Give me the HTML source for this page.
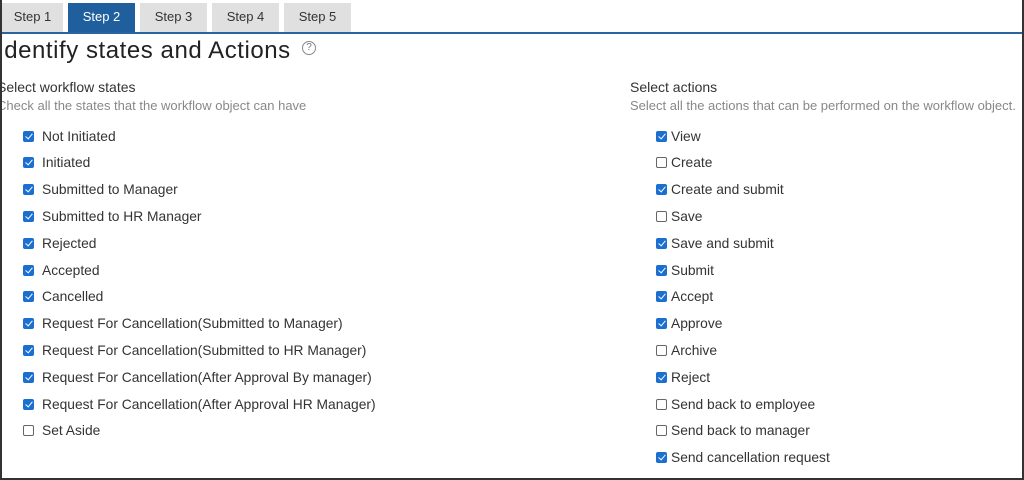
<!DOCTYPE html>
<html><head><style>
*{margin:0;padding:0;box-sizing:border-box}
body{width:1024px;height:480px;overflow:hidden;background:#fff;font-family:"Liberation Sans",sans-serif;position:relative}
.frame{position:absolute;left:0;top:0;width:1024px;height:480px;border-left:2px solid #333;border-right:2px solid #333;border-bottom:2px solid #333}
.tab{position:absolute;top:3px;height:30px;background:#e0e0e0;color:#333;font-size:13px;text-align:center;line-height:28px}
.tab.a{background:#1f5f9e;color:#fff}
.line{position:absolute;left:2px;right:2px;top:32px;height:2px;background:#2a64a0}
h1{position:absolute;left:-3px;top:37px;font-size:24px;font-weight:normal;color:#222;letter-spacing:0.55px}
.q{position:absolute;left:302px;top:41px;width:14px;height:14px;border:1.5px solid #888;border-radius:50%;font-size:10px;color:#777;text-align:center;line-height:11px}
.h{position:absolute;font-size:14px;color:#333;white-space:nowrap}
.s{position:absolute;font-size:13px;color:#888;white-space:nowrap}
.r{position:absolute;font-size:13.8px;color:#333;height:16px;line-height:16px}
.cb{position:absolute;width:11px;height:11px;border-radius:2px;top:2px}
.on{background:#1a6fd0}
.on:after{content:"";position:absolute;left:3.5px;top:1px;width:3px;height:6px;border:solid #fff;border-width:0 1.6px 1.6px 0;transform:rotate(40deg)}
.off{border:1px solid #666;background:#fff}
</style></head><body>
<div class="tab" style="left:2px;width:61px">Step 1</div>
<div class="tab a" style="left:68px;width:67px">Step 2</div>
<div class="tab" style="left:140px;width:67px">Step 3</div>
<div class="tab" style="left:212px;width:67px">Step 4</div>
<div class="tab" style="left:284px;width:67px">Step 5</div>
<div class="line"></div>
<h1>Identify states and Actions</h1>
<div class="q">?</div>
<div class="h" style="left:-3px;top:79px">Select workflow states</div>
<div class="s" style="left:-3px;top:98px">Check all the states that the workflow object can have</div>
<div class="h" style="left:630px;top:79px">Select actions</div>
<div class="s" style="left:630px;top:98px">Select all the actions that can be performed on the workflow object.</div>
<div id="L"></div>
<script>
var L=[["Not Initiated",1],["Initiated",1],["Submitted to Manager",1],["Submitted to HR Manager",1],["Rejected",1],["Accepted",1],["Cancelled",1],["Request For Cancellation(Submitted to Manager)",1],["Request For Cancellation(Submitted to HR Manager)",1],["Request For Cancellation(After Approval By manager)",1],["Request For Cancellation(After Approval HR Manager)",1],["Set Aside",0]];
var R=[["View",1],["Create",0],["Create and submit",1],["Save",0],["Save and submit",1],["Submit",1],["Accept",1],["Approve",1],["Archive",0],["Reject",1],["Send back to employee",0],["Send back to manager",0],["Send cancellation request",1]];
var h="";
function add(a,cx,tx){a.forEach(function(e,i){var y=128.5+i*26.8;h+='<div class="r" style="left:'+cx+'px;top:'+y+'px"><div class="cb '+(e[1]?'on':'off')+'" style="left:0"></div><span style="position:absolute;left:'+(tx-cx)+'px;white-space:nowrap">'+e[0]+'</span></div>';});}
add(L,23,42);add(R,656,671);
document.getElementById("L").innerHTML=h;
</script>
<div class="frame"></div>
</body></html>
